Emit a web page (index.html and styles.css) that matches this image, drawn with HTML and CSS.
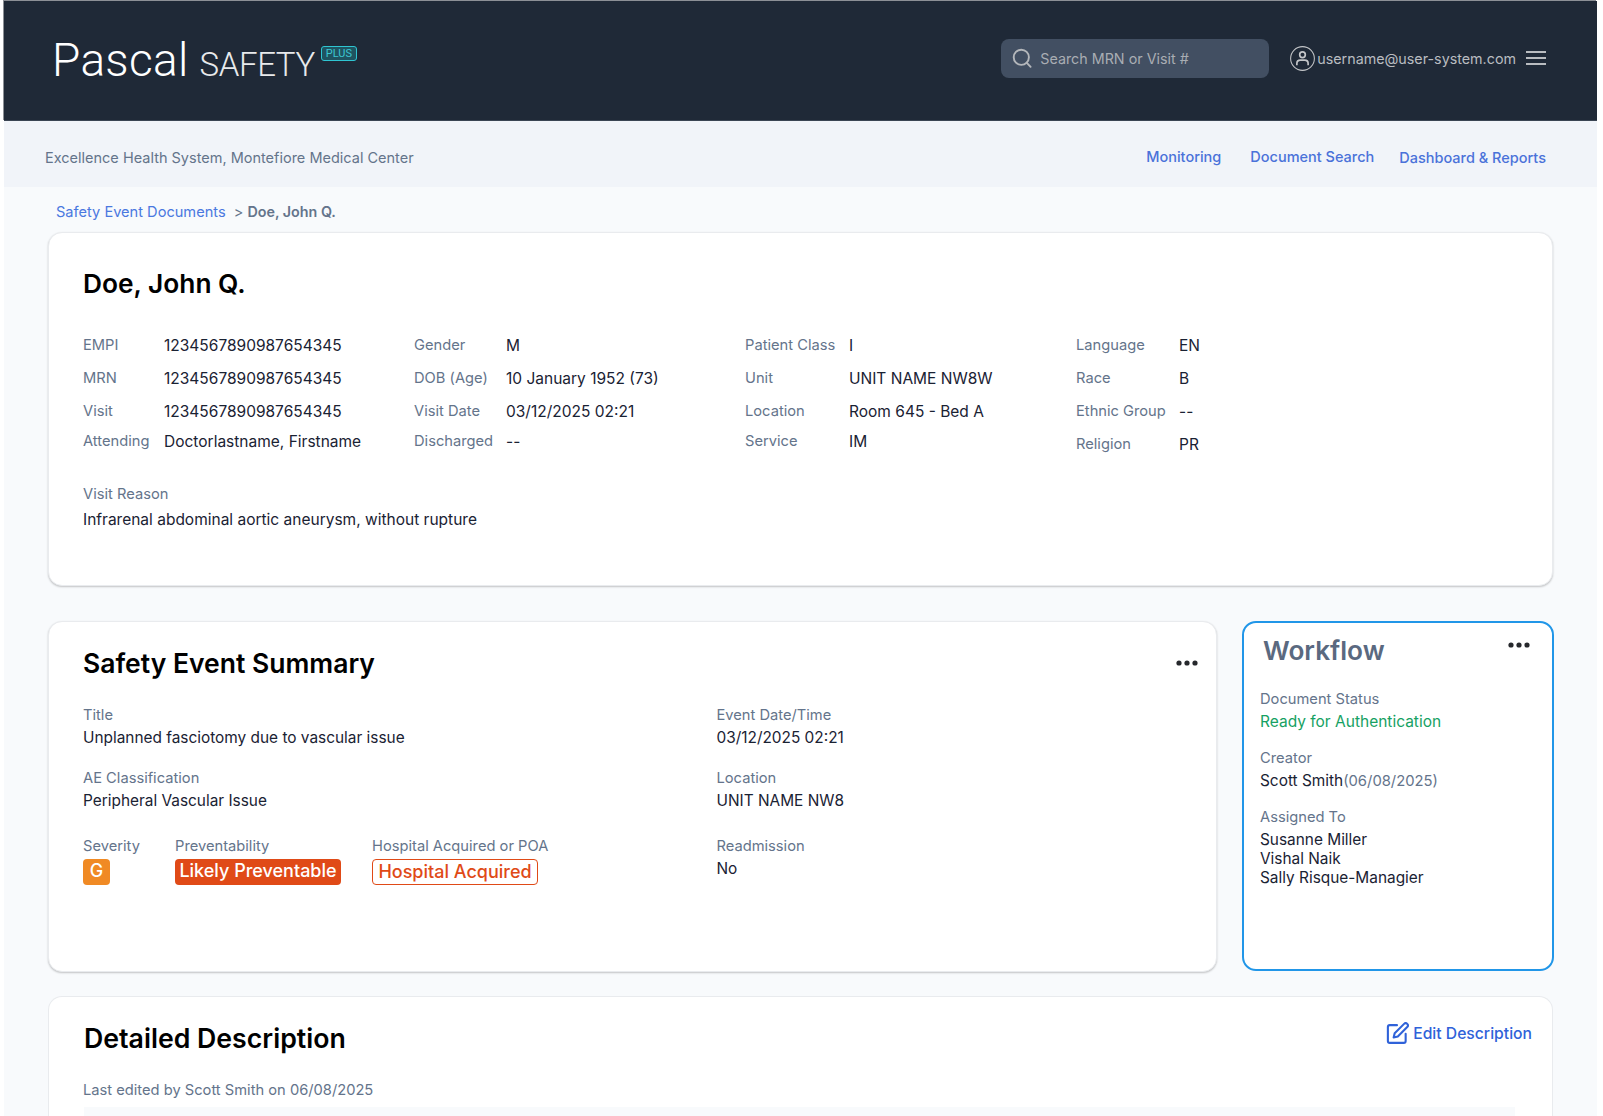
FILE: index.html
```html
<!DOCTYPE html>
<html lang="en">
<head>
  <meta charset="UTF-8">
  <meta name="viewport" content="width=device-width, initial-scale=1.0">
  <title>Pascal Safety - Doe, John Q.</title>
  <link rel="stylesheet" href="styles.css">
</head>
<body>
  <div class="app">
    <header class="topbar">
      <div class="logo">
        <span class="logo-name">Pascal</span>
        <span class="logo-product">SAFETY</span>
        <span class="logo-plus">PLUS</span>
      </div>
      <div class="search">
        <svg class="search-icon" viewBox="0 0 20 20" fill="none" stroke="#b4b7bb" stroke-width="1.9" stroke-linecap="round"><circle cx="9.3" cy="9.3" r="7.6"/><path d="M14.8 14.8 18.6 18.8"/></svg>
        <span>Search MRN or Visit #</span>
      </div>
      <div class="user">
        <svg class="user-icon" viewBox="0 0 24 24" fill="none" stroke="#c4c6c9" stroke-width="1"><circle cx="12" cy="12" r="11.4"/><circle cx="12" cy="8.4" r="2.7" stroke-width="1.6"/><path d="M6.600 18.400v-1.600c0-2 1.500-3.200 3.300-3.200h4.200c1.800 0 3.300 1.200 3.300 3.200v1.600" stroke-width="1.6"/></svg>
        <span>username@user-system.com</span>
      </div>
      <div class="menu-icon"><i></i><i></i><i></i></div>
    </header>

    <nav class="subnav">
      <span class="facility">Excellence Health System, Montefiore Medical Center</span>
      <a class="nav-link nav-monitoring">Monitoring</a>
      <a class="nav-link nav-search">Document Search</a>
      <a class="nav-link nav-reports">Dashboard &amp; Reports</a>
    </nav>

    <main class="content">
      <div class="breadcrumb">
        <a>Safety Event Documents</a>
        <span class="crumb-sep">&gt;</span>
        <b>Doe, John Q.</b>
      </div>

      <section class="card patient-card">
        <h1 class="patient-name">Doe, John Q.</h1>
        <div class="patient-grid">
          <dl class="fields fields-a">
            <dt>EMPI</dt><dd>1234567890987654345</dd>
            <dt>MRN</dt><dd>1234567890987654345</dd>
            <dt>Visit</dt><dd>1234567890987654345</dd>
            <dt>Attending</dt><dd>Doctorlastname, Firstname</dd>
          </dl>
          <dl class="fields fields-b">
            <dt>Gender</dt><dd>M</dd>
            <dt>DOB (Age)</dt><dd>10 January 1952 (73)</dd>
            <dt>Visit Date</dt><dd>03/12/2025 02:21</dd>
            <dt>Discharged</dt><dd>--</dd>
          </dl>
          <dl class="fields fields-c">
            <dt>Patient Class</dt><dd>I</dd>
            <dt>Unit</dt><dd>UNIT NAME NW8W</dd>
            <dt>Location</dt><dd>Room 645 - Bed A</dd>
            <dt>Service</dt><dd>IM</dd>
          </dl>
          <dl class="fields fields-d">
            <dt>Language</dt><dd>EN</dd>
            <dt>Race</dt><dd>B</dd>
            <dt>Ethnic Group</dt><dd>--</dd>
            <dt>Religion</dt><dd>PR</dd>
          </dl>
        </div>
        <div class="visit-reason">
          <div class="label">Visit Reason</div>
          <div class="value">Infrarenal abdominal aortic aneurysm, without rupture</div>
        </div>
      </section>

      <div class="event-row">
        <section class="card summary-card">
          <div class="card-head">
            <h2>Safety Event Summary</h2>
            <svg class="dots" viewBox="0 0 22 6" fill="#26282c"><circle cx="3" cy="3" r="2.6"/><circle cx="11" cy="3" r="2.6"/><circle cx="19" cy="3" r="2.6"/></svg>
          </div>
          <div class="summary-grid">
            <div class="summary-left">
              <div class="stack">
                <div class="label">Title</div>
                <div class="value">Unplanned fasciotomy due to vascular issue</div>
              </div>
              <div class="stack">
                <div class="label">AE Classification</div>
                <div class="value">Peripheral Vascular Issue</div>
              </div>
              <div class="badge-row">
                <div>
                  <div class="label">Severity</div>
                  <span class="badge badge-severity">G</span>
                </div>
                <div>
                  <div class="label">Preventability</div>
                  <span class="badge badge-solid">Likely Preventable</span>
                </div>
                <div>
                  <div class="label">Hospital Acquired or POA</div>
                  <span class="badge badge-outline">Hospital Acquired</span>
                </div>
              </div>
            </div>
            <div class="summary-right">
              <div class="stack">
                <div class="label">Event Date/Time</div>
                <div class="value">03/12/2025 02:21</div>
              </div>
              <div class="stack">
                <div class="label">Location</div>
                <div class="value">UNIT NAME NW8</div>
              </div>
              <div class="stack readmission">
                <div class="label">Readmission</div>
                <div class="value">No</div>
              </div>
            </div>
          </div>
        </section>

        <section class="workflow-card">
          <div class="workflow-head">
            <h2>Workflow</h2>
            <svg class="dots" viewBox="0 0 22 6" fill="#26282c"><circle cx="3" cy="3" r="2.6"/><circle cx="11" cy="3" r="2.6"/><circle cx="19" cy="3" r="2.6"/></svg>
          </div>
          <div class="wf-item">
            <div class="label">Document Status</div>
            <div class="value status-ready">Ready for Authentication</div>
          </div>
          <div class="wf-item">
            <div class="label">Creator</div>
            <div class="value">Scott Smith<span class="muted">(06/08/2025)</span></div>
          </div>
          <div class="wf-item">
            <div class="label">Assigned To</div>
            <div class="value assignees">Susanne Miller<br>Vishal Naik<br>Sally Risque-Managier</div>
          </div>
        </section>
      </div>

      <section class="card description-card">
        <div class="description-head">
          <h2>Detailed Description</h2>
          <a class="edit-link">
            <svg viewBox="0 0 22 22" fill="none" stroke="#2f62d9" stroke-width="2" stroke-linecap="round" stroke-linejoin="round"><path d="M10.500 3H3.600A1.800 1.800 0 0 0 1.800 4.800v13.400A1.800 1.800 0 0 0 3.600 20h13.400a1.800 1.800 0 0 0 1.800-1.800v-7"/><path d="M17.300 1.800a2.100 2.100 0 0 1 3 3l-9 9-4 1 1-4z"/></svg>
            Edit Description
          </a>
        </div>
        <div class="label edited">Last edited by Scott Smith on 06/08/2025</div>
        <div class="description-body"></div>
      </section>
    </main>
  </div>
</body>
</html>
```

FILE: styles.css
```css
html, body {
  margin: 0;
  padding: 0;
  height: 1116px;
  overflow: hidden;
  background: #fff;
  font-family: Inter, "Liberation Sans", sans-serif;
}
.app {
  margin: 1px 0 0 4px;
  width: 1593px;
  height: 1115px;
  background: #f8fafc;
}

/* top bar */
.topbar {
  height: 120px;
  box-sizing: border-box;
  padding: 0 51px 5px 48px;
  background: #1f2937;
  border-bottom: 1px solid #3b4553;
  box-shadow: -1px -1px 0 #8c9096;
  display: flex;
  align-items: center;
}
.logo {
  display: flex;
  align-items: baseline;
  color: #fff;
  font-family: Roboto, sans-serif;
  font-weight: 300;
  margin-top: 4px;
  margin-right: auto;
}
.logo-name {
  font-size: 46px;
  letter-spacing: .3px;
}
.logo-product {
  font-size: 33px;
  margin-left: 11px;
  color: #e8eaec;
  letter-spacing: -.4px;
}
.logo-plus {
  align-self: flex-start;
  margin: 13px 0 0 6px;
  padding: 0 4px;
  height: 13px;
  line-height: 13px;
  font-size: 11px;
  font-weight: 400;
  color: #3cc7d3;
  background: #1f5360;
  border: 1px solid #2fc5d2;
  border-radius: 3px;
}
.search {
  width: 268px;
  height: 39px;
  box-sizing: border-box;
  padding-left: 11px;
  background: #424f62;
  border-radius: 8px;
  display: flex;
  align-items: center;
  gap: 8px;
  font-size: 14.3px;
  color: #a9adb3;
}
.search-icon {
  width: 20px;
  height: 20px;
}
.user {
  display: flex;
  align-items: center;
  gap: 2px;
  margin-left: 21px;
  font-size: 14.3px;
  color: #b9bcc0;
}
.user-icon {
  width: 25px;
  height: 25px;
}
.menu-icon {
  width: 20px;
  margin-left: 10px;
  display: flex;
  flex-direction: column;
  gap: 4px;
}
.menu-icon i {
  height: 2px;
  background: #b9bcc0;
}

/* sub nav */
.subnav {
  height: 66px;
  box-sizing: border-box;
  padding: 6px 51px 0 41px;
  background: #f1f4f9;
  display: flex;
  align-items: center;
  font-size: 14.5px;
}
.facility {
  color: #64748b;
  margin-right: auto;
}
.nav-link {
  color: #4a72d9;
  font-weight: 500;
}
.nav-monitoring, .nav-search {
  margin-bottom: 2px;
}
.nav-search {
  margin-left: 29px;
}
.nav-reports {
  margin-left: 25px;
}

/* page content */
.content {
  padding: 0 44px;
}
.breadcrumb {
  height: 45px;
  box-sizing: border-box;
  padding: 16px 0 0 8px;
  font-size: 14.6px;
  line-height: 17px;
  color: #64748b;
}
.breadcrumb a {
  color: #4a78e0;
}
.crumb-sep {
  margin-left: 4px;
}
.breadcrumb b {
  font-size: 14.300px;
  font-weight: 600;
}
.card {
  background: #fff;
  border: 1px solid #e9ebee;
  border-radius: 14px;
  box-shadow: 0 1px 2px rgba(0, 0, 0, .22);
  box-sizing: border-box;
}
h1, h2 {
  margin: 0;
  color: #000;
  font-weight: 600;
}
.label {
  font-size: 14.7px;
  line-height: 18px;
  color: #64748b;
}
.value {
  font-size: 15.4px;
  line-height: 19px;
  color: #1a2233;
}

/* patient card */
.patient-card {
  height: 354px;
  padding: 35px 34px 0;
}
.patient-name {
  font-size: 26.300px;
  line-height: 32px;
}
.patient-grid {
  display: grid;
  grid-template-columns: repeat(4, 331px);
  margin-top: 29px;
}
.fields {
  margin: 0;
  display: grid;
  grid-template-rows: 32px 34px 32px 28px;
  align-items: center;
  font-size: 14.7px;
}
.fields-d {
  grid-template-rows: 32px 34px 32px 34px;
}
.fields-a { grid-template-columns: 81px 1fr; }
.fields-b { grid-template-columns: 92px 1fr; }
.fields-c { grid-template-columns: 104px 1fr; }
.fields-d { grid-template-columns: 103px 1fr; }
.fields dt {
  color: #64748b;
}
.fields dd {
  margin: 0;
  font-size: 15.5px;
  color: #1a2233;
}
.visit-reason {
  margin-top: 24px;
}
.visit-reason .value {
  margin-top: 7px;
  font-size: 15.5px;
}

/* summary + workflow */
.event-row {
  display: flex;
  align-items: flex-start;
  gap: 25px;
  margin-top: 35px;
}
.summary-card {
  flex: none;
  width: 1169px;
  height: 351px;
  padding: 24px 18px 0 34px;
}
.card-head {
  display: flex;
  justify-content: space-between;
  align-items: center;
}
.card-head h2 {
  font-size: 26.500px;
  line-height: 34px;
}
.dots {
  width: 22px;
  height: 6px;
}
.summary-grid {
  display: grid;
  grid-template-columns: 633.500px 1fr;
  margin-top: 26px;
}
.stack {
  margin-bottom: 22px;
}
.stack .label {
  margin-bottom: 4px;
}
.badge-row {
  display: grid;
  grid-template-columns: 92px 197px auto;
  margin-top: 27px;
}
.badge-row .label {
  margin-bottom: 4px;
}
.readmission {
  margin-top: 27px;
}
.badge {
  display: block;
  box-sizing: border-box;
  height: 26px;
  line-height: 24px;
  border-radius: 4px;
  font-size: 18px;
  font-weight: 500;
  text-align: center;
}
.badge-severity {
  width: 27px;
  background: #f08a24;
  color: #fff;
}
.badge-solid {
  width: 166px;
  background: #e04a17;
  color: #fff;
}
.badge-outline {
  width: 166px;
  border: 1px solid #e04a17;
  color: #e04a17;
}
.workflow-card {
  flex: none;
  width: 312px;
  height: 350px;
  box-sizing: border-box;
  padding: 11px 19px 0 16px;
  background: #fff;
  border: 2px solid #2196e8;
  border-radius: 14px;
}
.workflow-head {
  display: flex;
  justify-content: space-between;
  align-items: flex-start;
  padding-left: 3px;
}
.workflow-head h2 {
  font-size: 26.200px;
  line-height: 34px;
  color: #5a6980;
}
.workflow-head .dots {
  margin: 8px 3px 0 0;
}
.wf-item {
  margin-bottom: 17px;
}
.workflow-head + .wf-item {
  margin-top: 22px;
  margin-bottom: 18px;
}
.wf-item .label {
  margin-bottom: 4px;
}
.status-ready {
  color: #16a163;
  font-size: 15.500px;
}
.muted {
  color: #64748b;
  font-size: 14.800px;
}

/* description, cut off by the bottom of the window */
.description-card {
  height: 120px;
  margin-top: 24px;
  padding: 24px 20px 0 35px;
  border-bottom: 0;
  border-radius: 14px 14px 0 0;
  box-shadow: none;
  overflow: hidden;
}
.description-head {
  display: flex;
  justify-content: space-between;
  align-items: center;
}
.description-head h2 {
  font-size: 26.700px;
  line-height: 34px;
}
.edit-link {
  display: flex;
  align-items: center;
  gap: 4px;
  margin-top: -10px;
  font-size: 15.700px;
  font-weight: 500;
  color: #2f62d9;
}
.edit-link svg {
  width: 23px;
  height: 23px;
}
.edited {
  margin: 26px 0 0 -1px;
}
.description-body {
  height: 40px;
  margin: 8px 17px 0 0;
  background: #f8fafc;
}
```
